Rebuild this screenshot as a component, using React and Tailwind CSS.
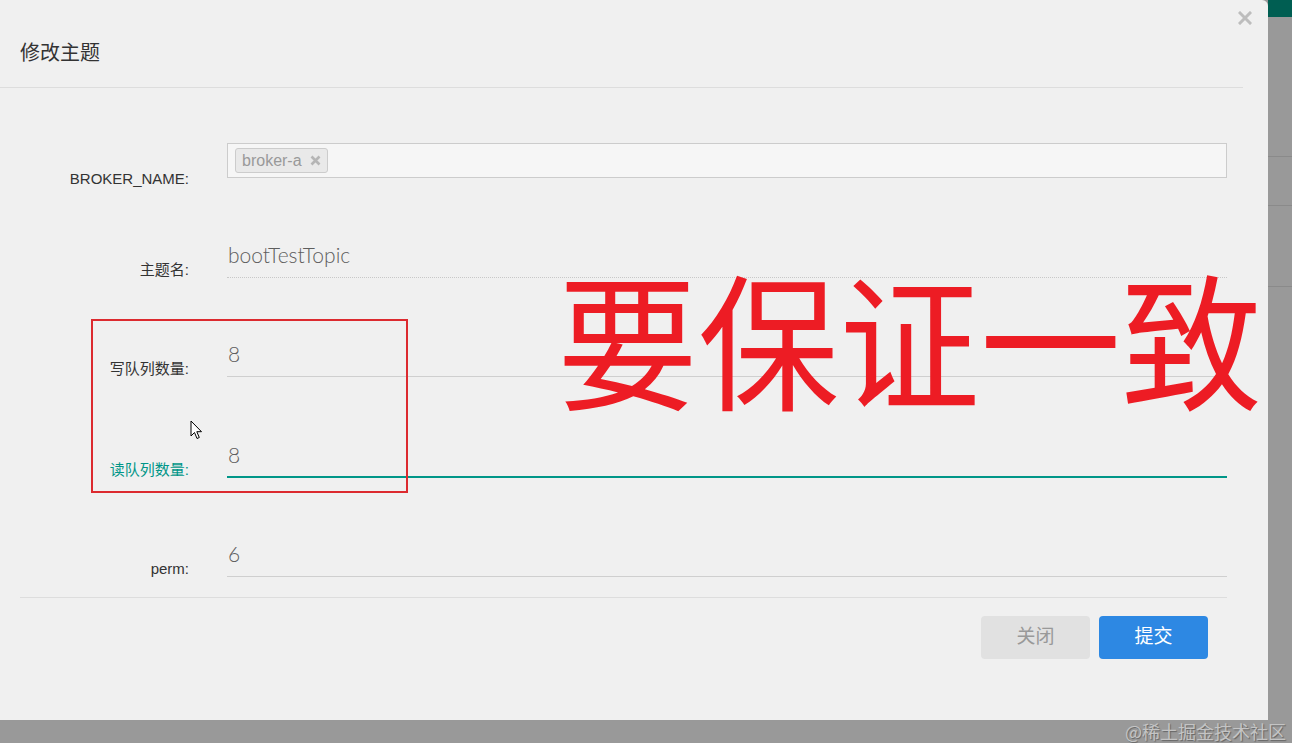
import React from 'react'

const labelFont = { fontFamily: '"Liberation Sans", "Noto Sans CJK SC", sans-serif' }

const Row = ({ label, children, className = '', labelClass = 'text-[#333]' }) => (
  <div className={`flex items-end ${className}`}>
    <div
      className={`w-[189px] shrink-0 text-right text-[15px] leading-[16px] ${labelClass}`}
      style={labelFont}
    >
      {label}
    </div>
    <div className="ml-[38px] w-[1000px]">{children}</div>
  </div>
)

const Value = ({ text, border }) => (
  <div
    className={`h-[38px] text-[21px] leading-[29px] font-light text-[#5e5e5e] ${border}`}
    style={{ fontFamily: 'Lato, "Open Sans", sans-serif' }}
  >
    <span className="pl-px">{text}</span>
  </div>
)

const Cursor = () => (
  <svg width="14" height="21" viewBox="0 0 14 21" className="absolute left-[190px] top-[420px]">
    <path
      d="M1 1 L1 16 L4.5 12.5 L7 18.5 L9.3 17.5 L6.8 11.7 L11.5 11.7 Z"
      fill="#fff"
      stroke="#000"
      strokeWidth="1"
      strokeLinejoin="round"
    />
  </svg>
)

export default function App() {
  return (
    <div className="relative w-[1292px] h-[743px] overflow-hidden bg-[#999] flex items-start">
      {/* modal */}
      <div className="w-[1268px] h-[720px] shrink-0 bg-[#f0f0f0] rounded-tr-[6px] flex flex-col">
        <div className="flex justify-between h-[87px]">
          <h4
            className="pl-[20px] pt-[39px] text-[20px] leading-[28px] text-[#333]"
            style={labelFont}
          >
            修改主题
          </h4>
          <button className="mr-[15px] mt-[10px] w-[16px] h-[16px] flex items-center justify-center">
            <svg width="14" height="14" viewBox="0 0 14 14">
              <path d="M2 2 L12 12 M12 2 L2 12" stroke="#bdbdbd" strokeWidth="3" strokeLinecap="square" />
            </svg>
          </button>
        </div>
        <div className="h-px w-[1243px] bg-[#dddddd]" />

        {/* form */}
        <div className="flex flex-col">
          <div className="flex mt-[55px] h-[46px]">
            <div
              className="w-[189px] shrink-0 self-end text-right text-[15px] leading-[20px] text-[#333]"
              style={labelFont}
            >
              BROKER_NAME:
            </div>
            <div className="ml-[38px] w-[1000px] h-[35px] border border-[#cccccc] bg-[#f6f6f6] flex items-center pl-[7px]">
              <span
                className="h-[25px] flex items-center gap-[8px] px-[6px] border border-[#cccccc] rounded-[3px] bg-[#e9e9e9] text-[16px] text-[#999]"
                style={labelFont}
              >
                broker-a
                <svg width="11" height="11" viewBox="0 0 11 11">
                  <path d="M1.5 1.5 L9.5 9.5 M9.5 1.5 L1.5 9.5" stroke="#b5b5b5" strokeWidth="2.6" />
                </svg>
              </span>
            </div>
          </div>

          <Row label="主题名:" className="mt-[51px]">
            <Value text="bootTestTopic" border="border-b border-dotted border-[#c8c8c8]" />
          </Row>
          <Row label="写队列数量:" className="mt-[61px]">
            <Value text="8" border="border-b border-[#cfcfcf]" />
          </Row>
          <Row label="读队列数量:" className="mt-[63px]" labelClass="text-[#009688]">
            <Value text="8" border="border-b-2 border-[#009688]" />
          </Row>
          <Row label="perm:" className="mt-[61px]">
            <Value text="6" border="border-b border-[#cfcfcf]" />
          </Row>
        </div>

        <div className="mt-[20px] ml-[20px] w-[1207px] h-px bg-[#dddddd]" />

        <div className="w-[1208px] flex justify-end gap-[9px] mt-[18px]">
          <button
            className="w-[109px] h-[43px] rounded-[4px] bg-[#e1e1e1] text-[#999] text-[19px]"
            style={labelFont}
          >
            关闭
          </button>
          <button
            className="w-[109px] h-[43px] rounded-[4px] bg-[#2d88e3] text-white text-[19px]"
            style={labelFont}
          >
            提交
          </button>
        </div>
      </div>

      {/* backdrop page on the right */}
      <div className="flex-1 flex flex-col h-[743px]">
        <div className="h-[17px] bg-[#005e52]" />
        <div className="h-[139px]" />
        <div className="h-px bg-[#8a8a8a]" />
        <div className="h-[48px]" />
        <div className="h-px bg-[#8a8a8a]" />
        <div className="h-[80px]" />
        <div className="h-px bg-[#8a8a8a]" />
      </div>

      {/* annotation overlay */}
      <div className="absolute left-[91px] top-[319px] w-[317px] h-[174px] border-2 border-[#dc2a2f]" />
      <div
        className="absolute left-[557px] top-[262px] text-[141px] leading-[141px] text-[#ed1c24] whitespace-nowrap scale-y-[1.04] origin-top"
        style={{ fontFamily: '"Noto Sans CJK SC", sans-serif' }}
      >
        要保证一致
      </div>
      <Cursor />

      <div
        className="absolute right-[6px] bottom-[2px] text-[18px] leading-[20px] text-[#c4c4c4] [text-shadow:1px_1px_1px_rgba(0,0,0,0.35)]"
        style={{ fontFamily: '"Noto Sans CJK SC", sans-serif' }}
      >
        @稀土掘金技术社区
      </div>
    </div>
  )
}
